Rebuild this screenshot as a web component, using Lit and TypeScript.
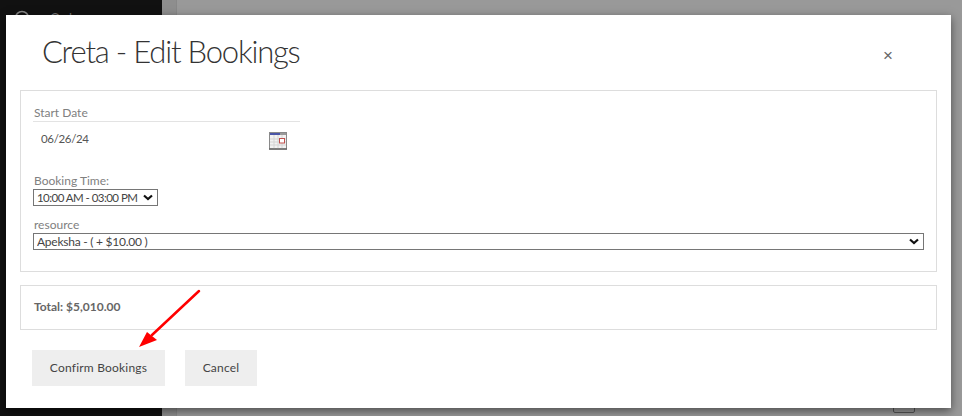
import { LitElement, html, css } from "lit";
import { customElement } from "lit/decorators.js";

@customElement("app-root")
export class AppRoot extends LitElement {
  static styles = css`
    :host {
      display: block;
      width: 962px;
      height: 416px;
      position: relative;
      overflow: hidden;
      font-family: "Lato", "Open Sans", sans-serif;
      color: #666;
    }
    * { box-sizing: border-box; }
    .page { display: flex; height: 416px; background: #999; }
    .side { width: 162px; background: #111; color: #777; display: flex; gap: 18px; padding: 10px 0 0 14px; font-size: 13px; flex: none; }
    .strip { width: 15px; background: #8e8e8e; border-right: 1px solid #888; flex: none; }
    .main { flex: 1; display: flex; align-items: flex-end; justify-content: flex-end; padding: 0 47px 3px 0; }
    .tick { width: 22px; height: 8px; border: 1px solid #555; border-radius: 2px; }
    .modal {
      position: absolute; left: 6px; top: 15px; width: 945px; height: 393px;
      background: #fff; box-shadow: 0 3px 9px rgba(0,0,0,.5);
      padding: 0 14px;
    }
    .head { height: 75px; display: flex; align-items: center; justify-content: space-between; padding: 0 44px 0 22px; }
    h1 { margin: 0 0 3px; font-size: 31px; font-weight: 300; color: #333; letter-spacing: -1.2px; line-height: 1; }
    .close { font-size: 17px; color: #666; font-family: "Liberation Sans", sans-serif; padding-top: 6px; }
    .box { border: 1px solid #ddd; padding: 0 12px; }
    .form { height: 182px; padding-top: 14px; }
    .lbl { font-size: 12px; line-height: 15px; color: #808080; padding-left: 1px; }
    .date { width: 267px; border-top: 1px solid #e3e3e3; height: 36px; margin-top: 1px; display: flex; justify-content: space-between; padding: 10px 13px 0 8px; font-size: 11.5px; letter-spacing: -.35px; color: #555; }
    .time { margin-top: 16px; }
    select {
      appearance: none; -webkit-appearance: none;
      display: block; font-family: inherit; font-size: 12px; letter-spacing: -.25px;
      height: 17px; padding: 0 0 0 3px; color: #444; border: 1px solid #767676; border-radius: 0;
      background: #fff url("data:image/svg+xml,%3Csvg xmlns='http://www.w3.org/2000/svg' width='10' height='7'%3E%3Cpath d='M1 1.5l4 3.5 4-3.5' fill='none' stroke='%23111' stroke-width='2.2'/%3E%3C/svg%3E") no-repeat;
    }
    .s1 { width: 125px; margin-top: 1px; font-size: 11.5px; letter-spacing: -.55px; background-position: 109px 4px; }
    .res { margin-top: 11px; }
    .s2 { width: 891px; margin-top: 1px; background-position: 875px 4px; }
    .total { margin-top: 13px; height: 45px; display: flex; align-items: center; padding: 0 13px 2px; font-size: 12px; font-weight: 700; color: #666; }
    .btns { display: flex; gap: 20px; margin: 20px 0 0 12px; }
    button { height: 36px; border: 0; background: #eee; color: #444; font-family: inherit; font-size: 12px; padding: 0 0 2px; letter-spacing: .2px; }
    .b1 { width: 133px; }
    .b2 { width: 72px; }
    .arrow { position: absolute; left: 130px; top: 285px; }
  `;

  render() {
    return html`
      <div class="page">
        <div class="side">
          <svg width="18" height="18" viewBox="0 0 18 18"><circle cx="8" cy="8" r="6.5" fill="none" stroke="#888" stroke-width="1.5"/></svg>
          <span>Orders</span>
        </div>
        <div class="strip"></div>
        <div class="main"><div class="tick"></div></div>
      </div>
      <div class="modal">
        <div class="head">
          <h1>Creta - Edit Bookings</h1>
          <span class="close">×</span>
        </div>
        <div class="box form">
          <div class="lbl">Start Date</div>
          <div class="date">
            <span>06/26/24</span>
            <svg width="18" height="18" viewBox="0 0 18 18">
              <rect x=".5" y=".5" width="17" height="16.5" fill="#f2f2f2" stroke="#8a8a8a"/>
              <rect x="1" y="1" width="10" height="2" fill="#4a55a8"/>
              <rect x="11" y="1" width="6" height="2" fill="#999"/>
              <path d="M1 7h16M1 10h16M1 13h16M5 3v14M9 3v14M13 3v14" stroke="#d4d4d4" stroke-width="1"/>
              <rect x="10.5" y="6.5" width="5" height="4.5" fill="#fff" stroke="#c0504d"/>
              <path d="M0 17h18" stroke="#666" stroke-width="1.5"/>
            </svg>
          </div>
          <div class="lbl time">Booking Time:</div>
          <select class="s1"><option>10:00 AM - 03:00 PM</option></select>
          <div class="lbl res">resource</div>
          <select class="s2"><option>Apeksha - ( + $10.00 )</option></select>
        </div>
        <div class="box total">Total: $5,010.00</div>
        <div class="btns">
          <button class="b1">Confirm Bookings</button>
          <button class="b2">Cancel</button>
        </div>
      </div>
      <svg class="arrow" width="75" height="65" viewBox="130 285 75 65">
        <path d="M199 291L152 335" stroke="#f00" stroke-width="2.5" stroke-linecap="round" fill="none"/>
        <path d="M139 347L147 332L157 340Z" fill="#f00"/>
      </svg>
    `;
  }
}
